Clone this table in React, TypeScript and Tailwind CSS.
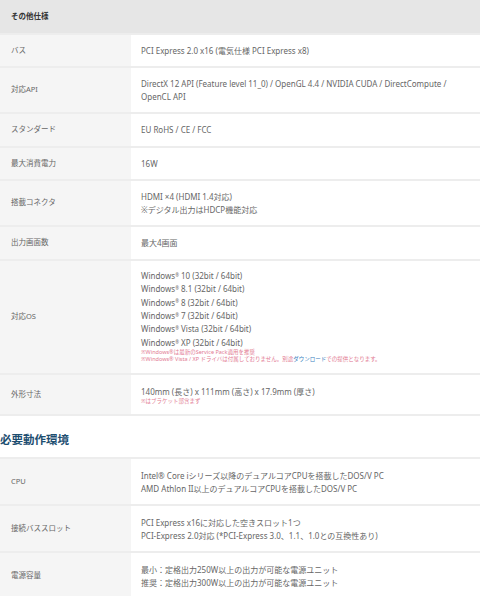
import type { ReactNode } from 'react'

type Row = { label: string; h: string; body: ReactNode }

const note = 'text-[5.5px] leading-[7px] text-[#e27a92]'

const other: Row[] = [
  { label: 'バス', h: 'h-[33px]', body: <p>PCI Express 2.0 x16 (電気仕様 PCI Express x8)</p> },
  {
    label: '対応API',
    h: 'h-[46px]',
    body: (
      <p className="leading-[13px]">
        DirectX 12 API (Feature level 11_0) / OpenGL 4.4 / NVIDIA CUDA / DirectCompute /<br />
        OpenCL API
      </p>
    ),
  },
  { label: 'スタンダード', h: 'h-[34px]', body: <p>EU RoHS / CE / FCC</p> },
  { label: '最大消費電力', h: 'h-[33px]', body: <p>16W</p> },
  {
    label: '搭載コネクタ',
    h: 'h-[46px]',
    body: (
      <p className="leading-[13px]">
        HDMI ×4 (HDMI 1.4対応)<br />※デジタル出力はHDCP機能対応
      </p>
    ),
  },
  { label: '出力画面数', h: 'h-[34px]', body: <p>最大4画面</p> },
  {
    label: '対応OS',
    h: 'h-[114px]',
    body: (
      <div className="-mt-[2px]">
        <div className="text-[8px] leading-[13.4px]">
          {['10', '8.1', '8', '7', 'Vista', 'XP'].map((v) => (
            <p key={v}>
              Windows<sup className="text-[4.5px]">®</sup> {v} (32bit / 64bit)
            </p>
          ))}
        </div>
        <p className={note}>※Windows®は最新のService Pack適用を推奨</p>
        <p className={note}>
          ※Windows® Vista / XP ドライバは付属しておりません。別途<span className="text-[#3a80c0]">ダウンロード</span>での提供となります。
        </p>
      </div>
    ),
  },
  {
    label: '外形寸法',
    h: 'h-[41px]',
    body: (
      <div>
        <p className="leading-[13px]">140mm (長さ) x 111mm (高さ) x 17.9mm (厚さ)</p>
        <p className={note}>※はブラケット部含まず</p>
      </div>
    ),
  },
]

const req: Row[] = [
  {
    label: 'CPU',
    h: 'h-[47px]',
    body: (
      <p className="leading-[13px]">
        Intel® Core iシリーズ以降のデュアルコアCPUを搭載したDOS/V PC<br />
        AMD Athlon II以上のデュアルコアCPUを搭載したDOS/V PC
      </p>
    ),
  },
  {
    label: '接続バススロット',
    h: 'h-[47px]',
    body: (
      <p className="leading-[13px]">
        PCI Express x16に対応した空きスロット1つ<br />
        PCI-Express 2.0対応 (*PCI-Express 3.0、1.1、1.0との互換性あり)
      </p>
    ),
  },
  {
    label: '電源容量',
    h: 'h-[47px]',
    body: (
      <p className="leading-[13px]">
        最小：定格出力250W以上の出力が可能な電源ユニット<br />
        推奨：定格出力300W以上の出力が可能な電源ユニット
      </p>
    ),
  },
]

function SpecRow({ row }: { row: Row }) {
  return (
    <div className={`flex border-t-2 border-[#ededed] ${row.h}`}>
      <div className="flex w-[131px] shrink-0 items-center bg-[#f5f5f5] pl-[11px] text-[7.5px]">{row.label}</div>
      <div className="flex flex-1 items-center whitespace-nowrap bg-white pl-[10px]">{row.body}</div>
    </div>
  )
}

export default function App() {
  return (
    <div
      className="h-[596px] w-[480px] overflow-hidden bg-white text-[8px] text-[#666]"
      style={{ fontFamily: '"Noto Sans", "Noto Sans CJK JP", sans-serif' }}
    >
      <div className="flex h-[33px] items-center bg-[#e6e6e6] pl-[11px] text-[7.5px] font-bold text-[#333]">
        その他仕様
      </div>
      {other.map((r) => (
        <SpecRow key={r.label} row={r} />
      ))}
      <div className="border-t-2 border-[#ededed]" />
      <h2 className="mt-[16px] mb-[9px] text-[11.5px] leading-[16px] font-bold text-[#1d4e70]">必要動作環境</h2>
      {req.map((r) => (
        <SpecRow key={r.label} row={r} />
      ))}
    </div>
  )
}
